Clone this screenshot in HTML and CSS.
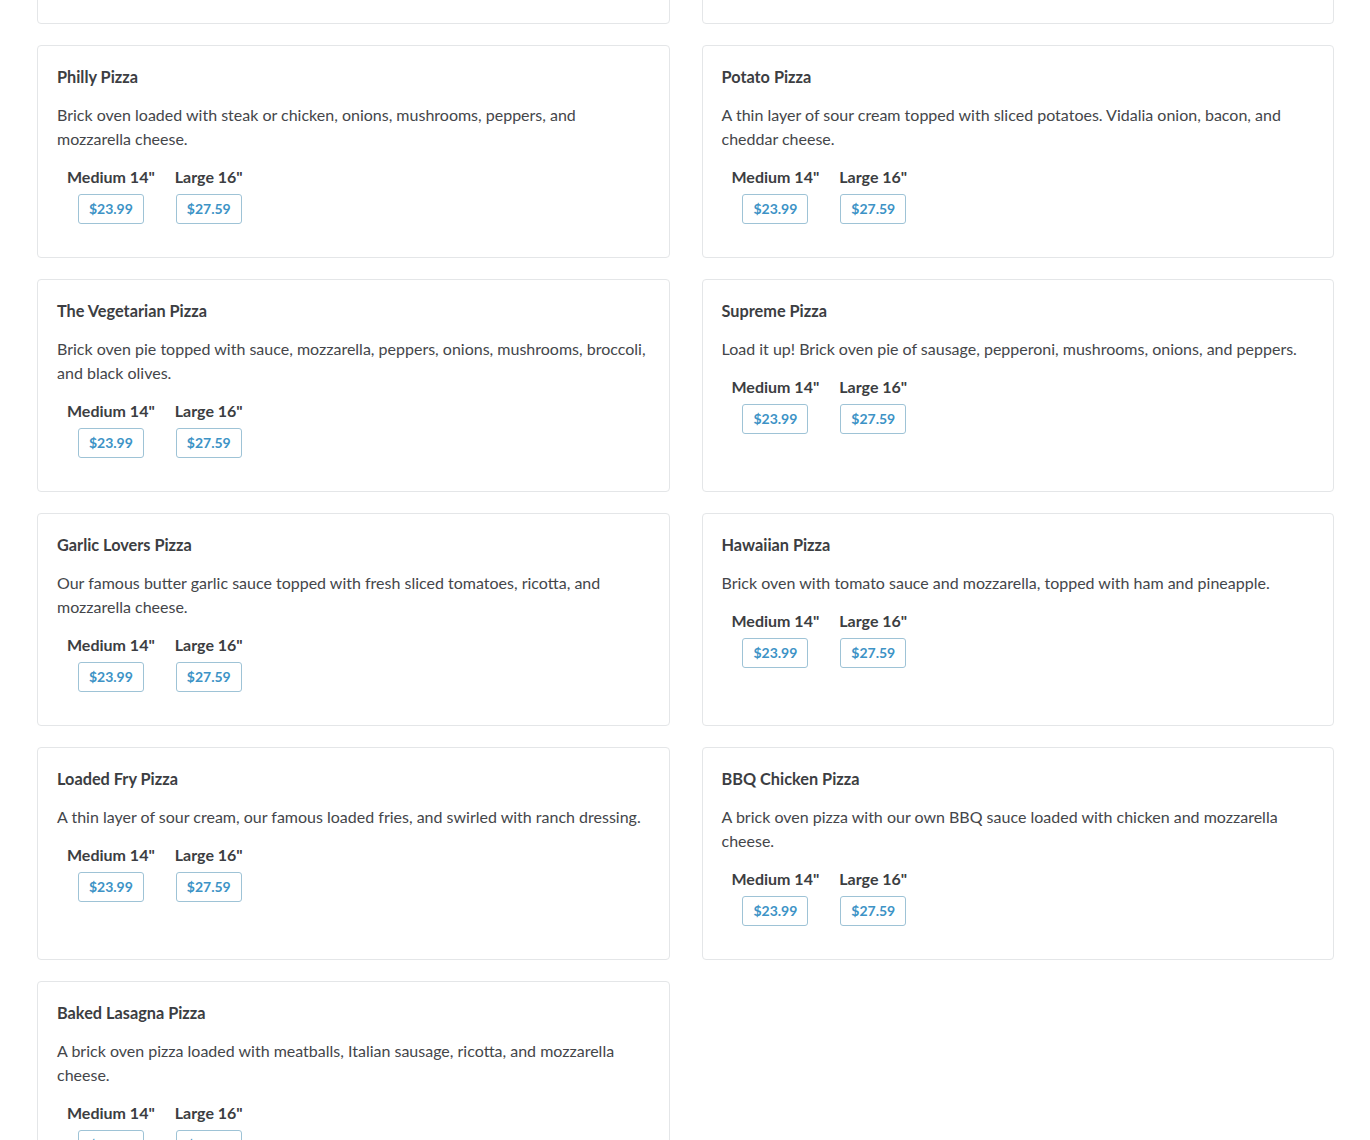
FILE: index.html
```html
<!DOCTYPE html>
<html lang="en">
<head>
<meta charset="utf-8">
<title>Pizza Menu</title>
<link rel="stylesheet" href="styles.css">
</head>
<body>
<main class="menu">
  <article class="card">
    <h3 class="name">Cheese Pizza</h3>
    <p class="desc">Brick oven pie topped with our famous homemade tomato sauce and a blend of mozzarella cheese.</p>
    <div class="sizes">
      <div class="size"><div class="label">Medium 14"</div><span class="price">$23.99</span></div>
      <div class="size"><div class="label">Large 16"</div><span class="price">$27.59</span></div>
    </div>
  </article>
  <article class="card">
    <h3 class="name">White Pizza</h3>
    <p class="desc">Garlic butter sauce topped with ricotta, mozzarella, and fresh basil on a brick oven crust.</p>
    <div class="sizes">
      <div class="size"><div class="label">Medium 14"</div><span class="price">$23.99</span></div>
      <div class="size"><div class="label">Large 16"</div><span class="price">$27.59</span></div>
    </div>
  </article>

  <article class="card">
    <h3 class="name">Philly Pizza</h3>
    <p class="desc">Brick oven loaded with steak or chicken, onions, mushrooms, peppers, and mozzarella cheese.</p>
    <div class="sizes">
      <div class="size"><div class="label">Medium 14"</div><span class="price">$23.99</span></div>
      <div class="size"><div class="label">Large 16"</div><span class="price">$27.59</span></div>
    </div>
  </article>
  <article class="card">
    <h3 class="name">Potato Pizza</h3>
    <p class="desc">A thin layer of sour cream topped with sliced potatoes. Vidalia onion, bacon, and cheddar cheese.</p>
    <div class="sizes">
      <div class="size"><div class="label">Medium 14"</div><span class="price">$23.99</span></div>
      <div class="size"><div class="label">Large 16"</div><span class="price">$27.59</span></div>
    </div>
  </article>

  <article class="card">
    <h3 class="name">The Vegetarian Pizza</h3>
    <p class="desc">Brick oven pie topped with sauce, mozzarella, peppers, onions, mushrooms, broccoli, and black olives.</p>
    <div class="sizes">
      <div class="size"><div class="label">Medium 14"</div><span class="price">$23.99</span></div>
      <div class="size"><div class="label">Large 16"</div><span class="price">$27.59</span></div>
    </div>
  </article>
  <article class="card">
    <h3 class="name">Supreme Pizza</h3>
    <p class="desc">Load it up! Brick oven pie of sausage, pepperoni, mushrooms, onions, and peppers.</p>
    <div class="sizes">
      <div class="size"><div class="label">Medium 14"</div><span class="price">$23.99</span></div>
      <div class="size"><div class="label">Large 16"</div><span class="price">$27.59</span></div>
    </div>
  </article>

  <article class="card">
    <h3 class="name">Garlic Lovers Pizza</h3>
    <p class="desc">Our famous butter garlic sauce topped with fresh sliced tomatoes, ricotta, and mozzarella cheese.</p>
    <div class="sizes">
      <div class="size"><div class="label">Medium 14"</div><span class="price">$23.99</span></div>
      <div class="size"><div class="label">Large 16"</div><span class="price">$27.59</span></div>
    </div>
  </article>
  <article class="card">
    <h3 class="name">Hawaiian Pizza</h3>
    <p class="desc">Brick oven with tomato sauce and mozzarella, topped with ham and pineapple.</p>
    <div class="sizes">
      <div class="size"><div class="label">Medium 14"</div><span class="price">$23.99</span></div>
      <div class="size"><div class="label">Large 16"</div><span class="price">$27.59</span></div>
    </div>
  </article>

  <article class="card">
    <h3 class="name">Loaded Fry Pizza</h3>
    <p class="desc">A thin layer of sour cream, our famous loaded fries, and swirled with ranch dressing.</p>
    <div class="sizes">
      <div class="size"><div class="label">Medium 14"</div><span class="price">$23.99</span></div>
      <div class="size"><div class="label">Large 16"</div><span class="price">$27.59</span></div>
    </div>
  </article>
  <article class="card">
    <h3 class="name">BBQ Chicken Pizza</h3>
    <p class="desc">A brick oven pizza with our own BBQ sauce loaded with chicken and mozzarella cheese.</p>
    <div class="sizes">
      <div class="size"><div class="label">Medium 14"</div><span class="price">$23.99</span></div>
      <div class="size"><div class="label">Large 16"</div><span class="price">$27.59</span></div>
    </div>
  </article>

  <article class="card">
    <h3 class="name">Baked Lasagna Pizza</h3>
    <p class="desc">A brick oven pizza loaded with meatballs, Italian sausage, ricotta, and mozzarella cheese.</p>
    <div class="sizes">
      <div class="size"><div class="label">Medium 14"</div><span class="price">$23.99</span></div>
      <div class="size"><div class="label">Large 16"</div><span class="price">$27.59</span></div>
    </div>
  </article>
</main>
</body>
</html>
```

FILE: styles.css
```css
* { box-sizing: border-box; }

html, body {
  margin: 0;
  padding: 0;
  background: #ffffff;
}

body {
  font-family: Lato, "Open Sans", "Liberation Sans", sans-serif;
  color: #3f4145;
  font-size: 16px;
  line-height: 24px;
}

.menu {
  width: 1297px;
  margin: -189px 0 0 37px;
  display: grid;
  grid-template-columns: 632.5px 632.5px;
  column-gap: 32px;
  row-gap: 21px;
  padding-bottom: 40px;
}

.card {
  border: 1px solid #e4e6e8;
  border-radius: 4px;
  padding: 19px 19px 19px;
  background: #fff;
}

.name {
  margin: 0 0 14px;
  font-size: 16.3px;
  line-height: 24px;
  font-weight: 700;
  color: #3c3e42;
}

.desc {
  margin: 0 0 14px;
  font-size: 16px;
  line-height: 24px;
  color: #44464a;
}

.sizes {
  display: flex;
  margin-bottom: 14px;
}

.size {
  padding: 0 10px;
  text-align: center;
}

.label {
  font-weight: 700;
  font-size: 16px;
  line-height: 24px;
  color: #3c3e42;
  margin-bottom: 5px;
}

.price {
  display: inline-block;
  border: 1px solid #9ec3d6;
  border-radius: 3px;
  padding: 4px 10px;
  font-size: 14px;
  line-height: 20px;
  font-weight: 700;
  color: #3d93c6;
}
```
